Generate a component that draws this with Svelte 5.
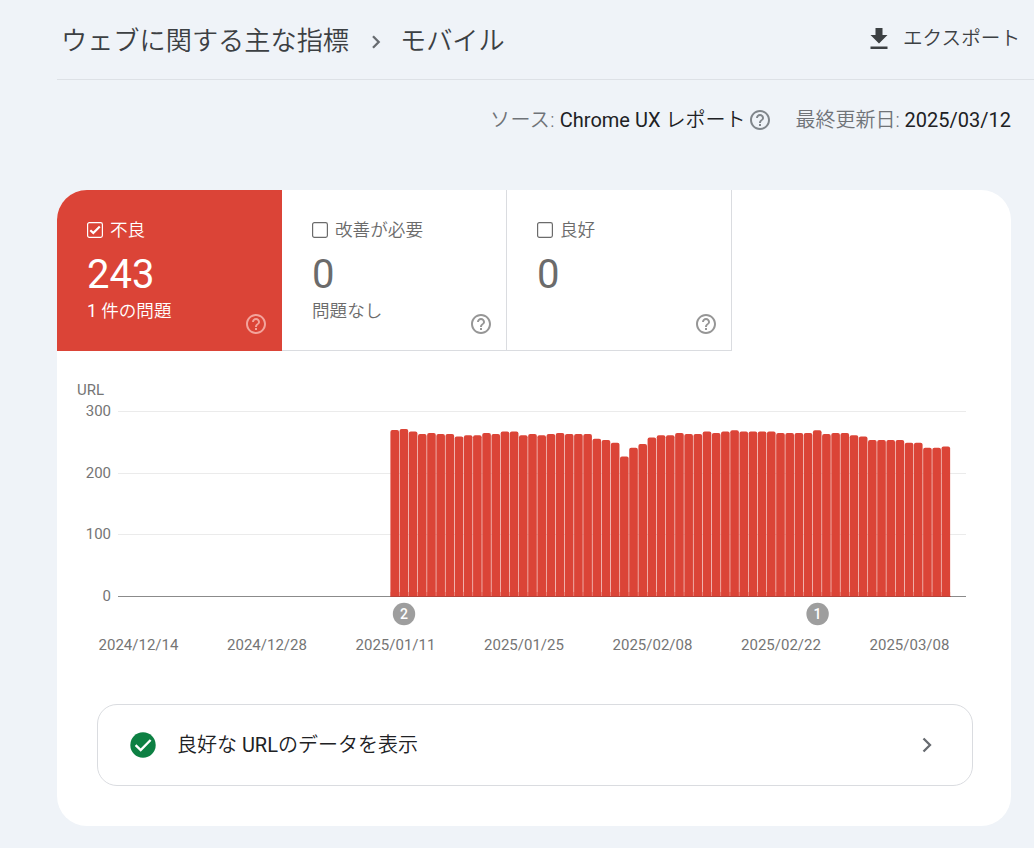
<script>
  const tiles = [
    { label: '不良', count: '243', num: '1', note: ' 件の問題', active: true },
    { label: '改善が必要', count: '0', num: '', note: '問題なし', active: false },
    { label: '良好', count: '0', num: '', note: '', active: false }
  ];

  // Number of poor URLs for each day, starting on 2025/01/11
  const values = [
    270, 271.5, 267.5, 263.5, 265, 263.5, 263.5, 259.5, 261.5, 261.5, 265, 263.5, 267.5, 267.5, 261.5,
    263.5, 261.5, 263.5, 265, 263.5, 263.5, 263.5, 255.5, 253.5, 249, 227, 241, 247, 257.5, 261.5, 261.5,
    265, 263.5, 263.5, 267.5, 265, 267.5, 269.5, 267.5, 267.5, 267.5, 267.5, 265, 265, 265, 265, 269.5,
    263.5, 265, 265, 261.5, 259.5, 253.5, 253.5, 253.5, 253.5, 249, 249, 241, 241, 243
  ];
  const baseline = 245.5;
  const unit = 61.7 / 100;
  const pitch = 9.185;
  const left = 333.4;
  const dates = ['2024/12/14', '2024/12/28', '2025/01/11', '2025/01/25', '2025/02/08', '2025/02/22', '2025/03/08'];
  const ticks = [300, 200, 100, 0];
  const tickY = { 300: 60.5, 200: 122.5, 100: 183.5, 0: 245.5 };
  const markers = [
    { x: 347, text: '2' },
    { x: 760.6, text: '1' }
  ];

  function bar(v, i) {
    const x = left + i * pitch;
    const w = pitch - 0.55;
    const y = baseline - v * unit;
    return `M${x} ${baseline}V${y + 2}q0-2 2-2h${w - 4}q2 0 2 2V${baseline}z`;
  }
</script>

{#snippet help(size)}
  <svg class="help" width={size} height={size} viewBox="2 2 20 20" fill="currentColor" aria-hidden="true">
    <path d="M11 18h2v-2h-2v2zm1-16C6.48 2 2 6.48 2 12s4.48 10 10 10 10-4.480 10-10S17.520 2 12 2zm0 18c-4.410 0-8-3.590-8-8s3.590-8 8-8 8 3.590 8 8-3.590 8-8 8zm0-14c-2.210 0-4 1.790-4 4h2c0-1.100.9-2 2-2s2 .9 2 2c0 2-3 1.750-3 5h2c0-2.250 3-2.500 3-5 0-2.210-1.790-4-4-4z" />
  </svg>
{/snippet}

<div class="page">
  <header>
    <nav>
      <span class="crumb first">ウェブに関する主な指標</span>
      <svg class="sep" width="10" height="14" viewBox="0 0 10 14"><path d="M2 1.200 7.700 7 2 12.800" /></svg>
      <span class="crumb second">モバイル</span>
    </nav>
    <div class="export">
      <svg width="18" height="22" viewBox="0 0 18 22" fill="#3c4043"><path d="M5.500 0h7v7H17.500L9 15.500.5 7h5zM.5 18.600h17v2.500H.5z" /></svg>
      <span>エクスポート</span>
    </div>
  </header>

  <div class="meta">
    <span class="source"><span class="dim src">ソース:</span> <b>Chrome UX <i>レポート</i></b></span>
    {@render help(20)}
    <span class="updated"><span class="dim upd">最終更新日:</span> <b>2025/03/12</b></span>
  </div>

  <main>
    <div class="tiles">
      {#each tiles as tile}
        <section class="tile" class:active={tile.active}>
          <div class="label">
            <svg width="16" height="16" viewBox="0 0 16 16" fill="none" stroke="currentColor">
              <rect x=".6" y=".6" width="14.800" height="14.800" rx="1.800" stroke-width="1.200" />
              {#if tile.active}<path d="M3.300 8.200 6.300 11 12.800 4.500" stroke-width="2.200" />{/if}
            </svg>
            <span>{tile.label}</span>
          </div>
          <div class="count">{tile.count}</div>
          <div class="foot">
            <span><b>{tile.num}</b>{tile.note}</span>
            {@render help(20)}
          </div>
        </section>
      {/each}
    </div>

    <svg class="chart" width="954" height="353" viewBox="0 0 954 353">
      <text x="20" y="44" class="axis">URL</text>
      {#each ticks as t}
        <line x1="61" x2="909" y1={tickY[t]} y2={tickY[t]} stroke={t === 0 ? '#8b8b8b' : '#ebebeb'} />
        <text x="54" y={tickY[t] + 4.500} text-anchor="end" class="axis">{t}</text>
      {/each}
      {#each values as v, i}
        <path d={bar(v, i)} fill="#db4437" />
      {/each}
      <rect x={left} y="241" width={pitch * values.length - 0.5} height="4.500" fill="#db4437" opacity=".45" />
      <line x1={left} x2={left + pitch * values.length} y1="245.500" y2="245.500" stroke="#b5433a" />
      {#each markers as m}
        <circle cx={m.x} cy="263" r="11.200" fill="#9e9e9e" />
        <text x={m.x} y="267.500" text-anchor="middle" class="marker">{m.text}</text>
      {/each}
      {#each dates as d, i}
        <text x={81.500 + i * 128.500} y="299" text-anchor="middle" class="axis date">{d}</text>
      {/each}
    </svg>

    <div class="link">
      <svg width="26" height="26" viewBox="0 0 26 26"><circle cx="13" cy="13" r="12.700" fill="#0d8043" /><path d="M5.600 13.200 10.700 18 20.600 8" fill="none" stroke="#fff" stroke-width="2.400" /></svg>
      <span class="text">良好な <b>URL</b>のデータを表示</span>
      <svg class="go" width="10" height="16" viewBox="0 0 10 16"><path d="M1.500 1.500 8 8 1.500 14.500" /></svg>
    </div>
  </main>
</div>

<style>
  :global(body) {
    background: #eff3f8;
  }
  .page {
    box-sizing: border-box;
    width: 1034px;
    height: 848px;
    padding-left: 57px;
    overflow: hidden;
    background: #eff3f8;
    font-family: Roboto, 'Noto Sans CJK JP', sans-serif;
    color: #202124;
    white-space: nowrap;
  }
  b {
    font-weight: 400;
  }
  header {
    box-sizing: border-box;
    height: 80px;
    border-bottom: 1px solid #dde1e6;
    display: flex;
    justify-content: space-between;
    padding: 0 14px 0 4px;
  }
  nav,
  .export {
    display: flex;
    align-items: center;
    height: 80px;
    color: #3c4043;
    font-weight: 350;
  }
  .crumb {
    font-size: 26.2px;
    line-height: 40px;
    padding-top: 2px;
  }
  .first {
    width: 310px;
  }
  .sep {
    margin: 3px 19px 0 0;
  }
  .sep path,
  .go path {
    fill: none;
    stroke: #676b70;
    stroke-width: 2.3;
  }
  .export {
    height: 77px;
    gap: 15px;
    font-size: 19.6px;
  }
  .export span {
    margin-top: -4px;
  }
  .meta {
    display: flex;
    align-items: center;
    justify-content: flex-end;
    height: 28px;
    padding: 26px 23px 0 0;
    font-size: 20px;
  }
  .source,
  .updated {
    margin-top: -4px;
  }
  .meta i {
    font-style: normal;
    font-weight: 350;
  }
  .dim {
    color: #6f7378;
    font-weight: 350;
  }
  .src {
    letter-spacing: 0.4px;
  }
  .meta .help {
    color: #80868b;
    margin: -1px 25px 0 5px;
  }
  main {
    box-sizing: border-box;
    width: 954px;
    height: 636px;
    margin-top: 56px;
    border-radius: 30px;
    background: #fff;
    overflow: hidden;
  }
  .tiles {
    display: flex;
  }
  .tile {
    box-sizing: border-box;
    width: 225px;
    height: 161px;
    padding: 27px 15px 0 30px;
    border-right: 1px solid #dadce0;
    border-bottom: 1px solid #dadce0;
    color: #6b6b6b;
  }
  .tile.active {
    background: #db4437;
    border-color: #db4437;
    color: #fff;
  }
  .label {
    display: flex;
    align-items: center;
    gap: 7px;
    height: 26px;
    font-size: 17.6px;
    font-weight: 350;
  }
  .label span {
    margin-top: -4px;
  }
  .count {
    height: 49px;
    margin-top: 7px;
    font-size: 40px;
    line-height: 50px;
  }
  .foot {
    display: flex;
    justify-content: space-between;
    height: 35px;
    font-size: 17.6px;
    line-height: 24px;
    font-weight: 350;
  }
  .foot .help {
    margin-top: 14.5px;
    color: #969696;
  }
  .active .help {
    color: #f3a49c;
  }
  .chart {
    display: block;
  }
  .axis {
    font-size: 15px;
    fill: #757575;
  }
  .marker {
    font-size: 14px;
    font-weight: 500;
    fill: #fff;
  }
  .link {
    box-sizing: border-box;
    display: flex;
    align-items: center;
    width: 876px;
    height: 82px;
    margin-left: 40px;
    padding: 0 40px 0 32px;
    border: 1px solid #dadce0;
    border-radius: 20px;
  }
  .text {
    flex: 1;
    margin: -4px 0 0 21px;
    font-size: 20px;
    font-weight: 350;
  }
</style>
